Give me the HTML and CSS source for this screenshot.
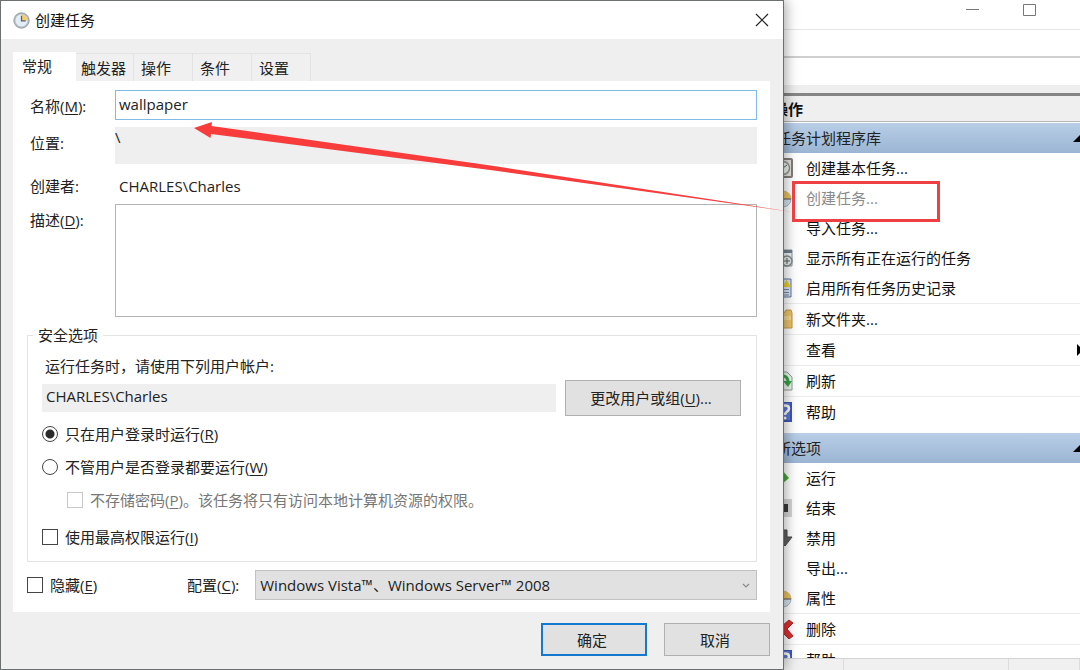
FILE: index.html
```html
<!DOCTYPE html>
<html lang="zh-CN">
<head>
<meta charset="utf-8">
<title>创建任务</title>
<link rel="stylesheet" href="styles.css">
</head>
<body>
<svg class="defs" aria-hidden="true">
  <symbol id="clock" viewBox="0 0 20 20">
    <circle cx="10" cy="10" r="9" fill="#b9c0c6" stroke="#8b9298"/>
    <circle cx="10" cy="10" r="7" fill="#e3eff8"/>
    <path d="M10 10V3a7 7 0 0 1 7 7z" fill="#f2cf72"/>
    <path d="M10 4.500V10.500H15" fill="none" stroke="#5d5f62" stroke-width="1.500"/>
  </symbol>
  <symbol id="clock-small" viewBox="0 0 20 20">
    <circle cx="10" cy="11" r="8" fill="#d5e3ee" stroke="#a9b7c3"/>
    <path d="M10 11V3a8 8 0 0 1 8 8z" fill="#edc25c"/>
    <path d="M10 11h8" stroke="#7d7a70" stroke-width="1.500"/>
  </symbol>
  <symbol id="help" viewBox="0 0 20 20">
    <path d="M0 0h19v20H0z" fill="#3f57b5"/>
    <path d="M1 1h16v17H1z" fill="#5c78d2"/>
    <path d="M8 6.500c0-4 8-4 8 0 0 3-4 3-4 6.500" fill="none" stroke="#fff" stroke-width="2.500"/>
    <circle cx="12" cy="16" r="1.500" fill="#fff"/>
  </symbol>
</svg>
<div class="screen">
  <section class="dialog" role="dialog" aria-labelledby="dialog-title">
    <header class="titlebar">
      <svg class="title-icon"><use href="#clock"/></svg>
      <h1 id="dialog-title">创建任务</h1>
      <button class="close" type="button" aria-label="关闭">
        <svg viewBox="0 0 14 14"><path d="M1 1l12 12M13 1L1 13" fill="none" stroke="#222" stroke-width="1.200"/></svg>
      </button>
    </header>
    <form class="client">
      <div class="tabs" role="tablist">
        <button class="tab active" type="button" role="tab" aria-selected="true">常规</button>
        <button class="tab second" type="button" role="tab">触发器</button>
        <button class="tab" type="button" role="tab">操作</button>
        <button class="tab" type="button" role="tab">条件</button>
        <button class="tab" type="button" role="tab">设置</button>
      </div>
      <div class="panel">
        <div class="fields">
          <label for="name">名称(<u>M</u>):</label>
          <input id="name" class="name" type="text" value="wallpaper">
          <span>位置:</span>
          <output class="location">\</output>
          <span class="author-label">创建者:</span>
          <output class="author">CHARLES\Charles</output>
          <label class="desc-label" for="desc">描述(<u>D</u>):</label>
          <textarea id="desc" class="desc"></textarea>
        </div>
        <fieldset class="security">
          <legend>安全选项</legend>
          <p class="hint">运行任务时，请使用下列用户帐户:</p>
          <div class="account-row">
            <output class="account">CHARLES\Charles</output>
            <button class="btn change" type="button">更改用户或组(<u>U</u>)...</button>
          </div>
          <label class="choice"><input type="radio" name="logon" checked><span>只在用户登录时运行(<u>R</u>)</span></label>
          <label class="choice"><input type="radio" name="logon"><span>不管用户是否登录都要运行(<u>W</u>)</span></label>
          <label class="choice nested"><input type="checkbox" disabled><span>不存储密码(<u>P</u>)。该任务将只有访问本地计算机资源的权限。</span></label>
          <label class="choice highest"><input type="checkbox"><span>使用最高权限运行(<u>I</u>)</span></label>
        </fieldset>
        <div class="config-row">
          <label class="choice hidden-option"><input type="checkbox"><span>隐藏(<u>E</u>)</span></label>
          <label for="config">配置(<u>C</u>):</label>
          <div class="select-box">
            <select id="config"><option>Windows Vista™、Windows Server™ 2008</option></select>
            <svg class="chevron" viewBox="0 0 8 6"><path d="M1 1l3 3 3-3" fill="none" stroke="#8a8a8a" stroke-width="1.200"/></svg>
          </div>
        </div>
      </div>
      <footer class="buttons">
        <button class="btn primary" type="button">确定</button>
        <button class="btn" type="button">取消</button>
      </footer>
    </form>
  </section>

  <aside class="console">
    <div class="window-controls">
      <button type="button" aria-label="最小化"><svg viewBox="0 0 13 13"><path d="M0 6.500h13" stroke="#777"/></svg></button>
      <button type="button" aria-label="最大化"><svg viewBox="0 0 13 13"><path d="M.5 1.500h12v11H.5z" fill="none" stroke="#777"/></svg></button>
    </div>
    <div class="menu-strip"></div>
    <div class="tool-strip"></div>
    <div class="actions">
      <h2 class="pane-title">操作</h2>
      <h3 class="group"><span>任务计划程序库</span><svg viewBox="0 0 16 8"><path d="M0 8L8 0l8 8z"/></svg></h3>
      <ul class="first-list">
        <li><svg viewBox="0 0 20 20"><rect x="1" y="1" width="18" height="18" rx="1" fill="#e4e0dc" stroke="#827d79" stroke-width="2"/><circle cx="10" cy="10" r="6.500" fill="#edf3ee" stroke="#8d9492" stroke-width="1.500"/><path d="M10 10l4-3M10 10v-4" stroke="#55605a" fill="none"/></svg><a href="#">创建基本任务...</a></li>
        <li class="off"><svg><use href="#clock-small"/></svg><a href="#">创建任务...</a></li>
        <li><i></i><a href="#">导入任务...</a></li>
        <li><svg viewBox="0 0 20 20"><path d="M1 2h18v16H1z" fill="#edf1f3" stroke="#8c979f"/><path d="M1 2h18v3H1z" fill="#71808d"/><circle cx="14" cy="13" r="5" fill="#e3eae7" stroke="#7f8b87" stroke-width="1.500"/><path d="M14 10v3h3M11 13h3v3" fill="none" stroke="#576660"/></svg><a href="#">显示所有正在运行的任务</a></li>
        <li><svg viewBox="0 0 20 20"><path d="M1 1h17v18H1z" fill="#dbe6f3" stroke="#6076a0"/><path d="M9 9l4.500-7L18 9z" fill="#e7cf25"/><path d="M4 11.500h12M4 14.500h12M4 17h12" stroke="#7187ab"/></svg><a href="#">启用所有任务历史记录</a></li>
        <li class="rule"><svg viewBox="0 0 20 20"><path d="M2 4h9l2-3h5l1 3v15H2z" fill="#eac46a" stroke="#c69a45"/><path d="M3 7h15v4H3z" fill="#f5d88e"/></svg><a href="#">新文件夹...</a></li>
        <li class="rule"><i></i><a href="#">查看</a><svg class="submenu" viewBox="0 0 6 12"><path d="M0 0l6 6-6 6z"/></svg></li>
        <li class="rule"><svg viewBox="0 0 20 20"><path d="M2 1h12l5 5v13H2z" fill="#edf5ed" stroke="#8fa091"/><path d="M5 8c2-5 10-4 10 3" fill="none" stroke="#37a34a" stroke-width="3"/><path d="M10 10h9l-4 6z" fill="#37a34a"/></svg><a href="#">刷新</a></li>
        <li class="rule"><svg><use href="#help"/></svg><a href="#">帮助</a></li>
      </ul>
      <h3 class="group"><span>所选项</span><svg viewBox="0 0 16 8"><path d="M0 8L8 0l8 8z"/></svg></h3>
      <ul>
        <li><svg viewBox="0 0 20 20"><path d="M4 2h5l7 8-7 6H4z" fill="#45a737"/></svg><a href="#">运行</a></li>
        <li><svg viewBox="0 0 20 20"><path d="M1 1h18v18H1z" fill="#d5d5d5"/><path d="M6 6h9v8H6z" fill="#3a3a3a"/></svg><a href="#">结束</a></li>
        <li><svg viewBox="0 0 20 20"><path d="M8 2h6v7h5l-7 9-8-9h4z" fill="#606060" stroke="#484848"/></svg><a href="#">禁用</a></li>
        <li><i></i><a href="#">导出...</a></li>
        <li><svg><use href="#clock-small"/></svg><a href="#">属性</a></li>
        <li class="rule"><svg viewBox="0 0 20 20"><path d="M4 3l5 4 7-6 4 3-6 6 6 7-4 3-7-7-6 6-3-3 6-6-5-5z" fill="#d83232" stroke="#b02525"/></svg><a href="#">删除</a></li>
        <li class="rule"><svg><use href="#help"/></svg><a href="#">帮助</a></li>
      </ul>
    </div>
    <div class="statusbar"><span></span><span></span><span></span></div>
  </aside>
  <svg class="arrow" viewBox="0 0 600 96" aria-hidden="true"><path d="M0 8L18 2 17.500 6 300 46 599 92 300 50.500 17 14 16.500 18z" fill="#f83b3b"/></svg>
  <div class="highlight"></div>
</div>
</body>
</html>
```
FILE: styles.css
```css
* { box-sizing: border-box; }
body {
  margin: 0;
  background: #fff;
  color: #222;
  font: 15px/20px "Open Sans", "Noto Sans CJK SC", sans-serif;
}
button, input, select, textarea { font: inherit; color: inherit; border-radius: 0; margin: 0; }
h1, h2, h3, p, ul { margin: 0; padding: 0; font: inherit; }
ul { list-style: none; }
a { color: inherit; text-decoration: none; }
u { text-underline-offset: 2px; }
.defs { position: absolute; width: 0; height: 0; }

.screen {
  position: relative;
  display: grid;
  grid-template-columns: minmax(0, 1fr) 296px;
  height: 100vh;
  overflow: hidden;
}

/* Dialog */
.dialog {
  z-index: 1;
  display: flex;
  flex-direction: column;
  border: 1px solid #6c7070;
  background: #efefef;
  box-shadow: 2px 0 12px rgba(0, 0, 0, .35);
}
.titlebar {
  display: flex;
  align-items: center;
  height: 38px;
  padding: 0 14px 0 12px;
  background: #fff;
}
.title-icon { width: 17px; height: 17px; margin-right: 5px; }
.titlebar h1 { flex: 1; color: #111; }
.close { display: flex; padding: 0; border: 0; background: none; }
.close svg { width: 14px; height: 14px; }
.client { display: flex; flex-direction: column; padding: 13px 13px 0 12px; }
.tabs { display: flex; align-items: flex-end; height: 29px; }
.tab {
  width: 59px;
  height: 28px;
  padding: 0 0 0 7px;
  border: 1px solid #e3e3e3;
  border-width: 1px 1px 0 0;
  background: #f0f0f0;
  text-align: left;
}
.tab.second { width: 58px; padding-left: 5px; }
.tab.active {
  width: 63px;
  height: 29px;
  padding: 0 0 2px 9px;
  border: 0;
  background: #fff;
}
.panel { padding: 9px 13px 12px 14px; background: #fff; }
.fields { display: grid; grid-template-columns: 88px minmax(0, 1fr); }
.fields > label, .fields > span { padding: 6px 0 0 3px; }
.name { height: 30px; padding: 0 3px 2px; border: 1px solid #7fbbe6; outline: 0; background: #fff; margin-bottom: 7px; }
.location { height: 37px; background: #efefef; }
.author { padding: 12px 4px 0; }
.fields > .author-label { height: 40px; padding-top: 12px; }
.desc { height: 113px; border: 1px solid #b4b4b4; outline: 0; resize: none; }
.security {
  min-width: 0;
  margin: 8px 0;
  padding: 11px 15px 14px 14px;
  border: 1px solid #e4e4e4;
}
.security legend { margin-left: -9px; padding: 0 5px; }
.hint { padding-left: 3px; }
.account-row { display: flex; align-items: center; gap: 9px; margin: 4px 0 8px; }
.account { flex: 1; height: 28px; padding: 2px 4px; background: #efefef; }
.btn { width: 106px; height: 33px; padding: 0 4px 0 0; border: 1px solid #b0b0b0; background: #e1e1e1; }
.btn.change { width: 176px; height: 36px; }
.btn.primary { border: 2px solid #1579cf; }
.choice { display: flex; align-items: center; gap: 7px; margin-bottom: 13px; }
.choice.nested { padding-left: 25px; margin-bottom: 17px; color: #777; }
.choice.highest { margin-bottom: 0; }
.choice input { appearance: none; width: 16px; height: 16px; border: 1px solid #444; background: #fff; }
.choice input:disabled { border-color: #c8c8c8; }
.choice input[type="radio"] { border-radius: 50%; }
.choice input:checked { background: radial-gradient(circle, #2b2b2b 4px, #fff 5px); }
.config-row { display: flex; align-items: center; }
.hidden-option { width: 160px; margin: 0; }
.select-box { position: relative; flex: 1; margin-left: 16px; }
.select-box select {
  display: block;
  appearance: none;
  width: 100%;
  height: 30px;
  padding: 0 4px;
  border: 1px solid #c2c2c2;
  background: #e1e1e1;
}
.chevron { position: absolute; right: 7px; top: 13px; width: 8px; height: 6px; }
.buttons { display: flex; justify-content: flex-end; gap: 17px; padding: 11px 0 13px; }

/* Console window behind the dialog */
.console { display: flex; flex-direction: column; min-height: 0; margin-left: -16px; }
.window-controls { display: flex; flex: none; justify-content: flex-end; gap: 44px; height: 30px; padding: 3px 44px 0 0; border-bottom: 1px solid #e6e6e6; }
.window-controls button { display: flex; height: 13px; padding: 0; border: 0; background: none; }
.window-controls svg { width: 13px; height: 13px; }
.menu-strip { flex: none; height: 28px; border-bottom: 2px solid #cfcfcf; }
.tool-strip { flex: none; height: 38px; border-bottom: 3px solid #858585; background: linear-gradient(#fff 27px, #eee 27px); }
.actions { flex: 1; min-height: 0; overflow: hidden; }
.pane-title { height: 26px; padding: 3px 0 0 5px; border-bottom: 1px solid #b5b5b5; background: #efefef; color: #111; font-weight: bold; }
.group {
  display: flex;
  align-items: center;
  justify-content: space-between;
  height: 30px;
  padding-left: 8px;
  background: linear-gradient(#b9cee7, #9ab5d3);
}
.pane-title + .group { margin-top: 1px; }
.group svg { width: 16px; height: 8px; margin-right: -9px; }
.first-list { padding-bottom: 6px; }
.actions li { display: flex; align-items: center; gap: 13px; height: 30px; padding-left: 5px; color: #111; }
.actions li.rule { height: 31px; border-top: 1px solid #ececec; }
.actions li.off { color: #8a8a8a; }
.actions li svg, .actions li i { width: 20px; height: 20px; }
.actions li .submenu { width: 6px; height: 12px; margin: 0 -3px 0 auto; }
.statusbar { display: grid; grid-template-columns: 76px 1fr 71px; flex: none; height: 12px; border-top: 1px solid #d4d4d4; background: #f0f0f0; }
.statusbar span { border-right: 1px solid #dcdcdc; }

/* Annotations over both windows */
.arrow { position: absolute; z-index: 2; top: 120px; right: 286px; width: 600px; height: 96px; }
.highlight { position: absolute; z-index: 2; top: 181px; right: 140px; width: 148px; height: 41px; border: 3px solid #ee3f42; }
```
